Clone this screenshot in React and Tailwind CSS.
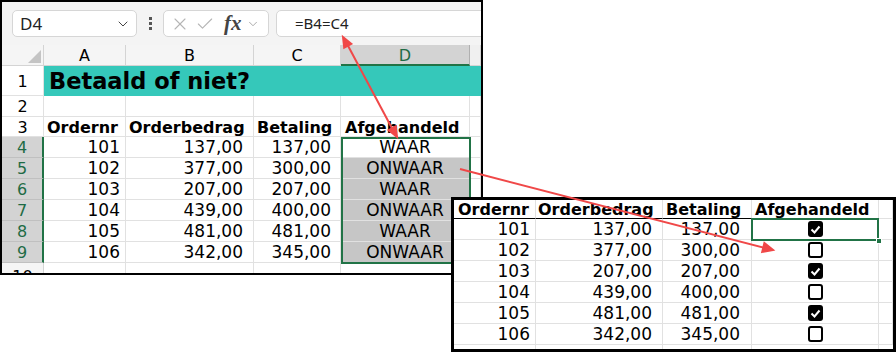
import React from "react";
import { X, Check, ChevronDown } from "lucide-react";

const rows = [
  [101, "137,00", "137,00", true],
  [102, "377,00", "300,00", false],
  [103, "207,00", "207,00", true],
  [104, "439,00", "400,00", false],
  [105, "481,00", "481,00", true],
  [106, "342,00", "345,00", false],
];

const cell = "border-r border-b border-[#e1e1e1] flex items-center overflow-hidden whitespace-nowrap pt-[2px]";
const font = { fontFamily: '"DejaVu Sans", Verdana, sans-serif' };

function Toolbar() {
  return (
    <div className="flex items-start h-[43px] bg-[#f4f4f4] pt-[8px] pl-[10px]" style={{ fontFamily: '"Noto Sans", "Open Sans", sans-serif' }}>
      <div className="shrink-0 w-[125px] h-[27px] rounded-[5px] border border-[#d6d6d6] bg-white flex items-center justify-between pl-[7px] pr-[5px] text-[17px] text-[#222]">
        <span>D4</span>
        <ChevronDown size={16} strokeWidth={1.5} className="text-[#444]" />
      </div>
      <div className="shrink-0 w-[26px] h-[27px] flex flex-col items-center justify-center gap-[2px]">
        <div className="w-[3px] h-[3px] bg-[#555]"></div>
        <div className="w-[3px] h-[3px] bg-[#555]"></div>
        <div className="w-[3px] h-[3px] bg-[#555]"></div>
      </div>
      <div className="shrink-0 w-[106px] h-[27px] rounded-[5px] border border-[#d6d6d6] bg-white flex items-center pl-[6px]">
        <X size={20} strokeWidth={1.3} className="text-[#b5b5b5]" />
        <Check size={20} strokeWidth={1.3} className="text-[#b5b5b5] ml-[5px]" />
        <span className="ml-[9px] text-[21px] italic font-bold text-[#444] leading-none" style={{ fontFamily: '"Liberation Serif", serif' }}>fx</span>
        <ChevronDown size={14} strokeWidth={1.4} className="text-[#999] ml-[4px]" />
      </div>
      <div className="shrink-0 ml-[7px] w-[260px] h-[27px] rounded-[5px] border border-[#d6d6d6] bg-white flex items-center pl-[18px] text-[15px] text-[#222]">
        =B4=C4
      </div>
    </div>
  );
}

function Sheet1() {
  const hdr = "border-r border-b border-[#d4d4d4] flex items-center justify-center text-[16px] pt-[2px]";
  return (
    <div className="relative grid grid-cols-[42px_82px_128px_87px_129px_11px] grid-rows-[21px_30px_21px_20px_21px_21px_21px_21px_21px_21px_21px] bg-white" style={font}>
      <div className={`${hdr} bg-[#f5f5f5] relative`}>
        <svg width="42" height="21" className="absolute inset-0">
          <polygon points="26,18 39,18 39,5" fill="#c4c4c4" />
        </svg>
      </div>
      <div className={`${hdr} bg-[#f5f5f5]`}>A</div>
      <div className={`${hdr} bg-[#f5f5f5]`}>B</div>
      <div className={`${hdr} bg-[#f5f5f5]`}>C</div>
      <div className="border-r border-[#b0b0b0] border-b-2 border-b-[#217346] bg-[#d3d3d3] flex items-center justify-center text-[16px] pt-[2px] text-[#1e6b45]">D</div>
      <div className={`${hdr} bg-[#f0f0f0]`}></div>

      <div className={`${cell} justify-center text-[16px] bg-white`}>1</div>
      <div className="col-span-5 bg-[#35c8ba] flex items-center pl-[5px] pt-[2px] text-[22.5px] font-bold text-black">Betaald of niet?</div>

      <div className={`${cell} justify-center text-[16px]`}>2</div>
      <div className={cell}></div>
      <div className={cell}></div>
      <div className={cell}></div>
      <div className={cell}></div>
      <div className={cell}></div>

      <div className={`${cell} justify-center text-[16px]`}>3</div>
      <div className={`${cell} pl-[3px] font-bold text-[16px]`}>Ordernr</div>
      <div className={`${cell} pl-[3px] font-bold text-[16px]`}>Orderbedrag</div>
      <div className={`${cell} pl-[3px] font-bold text-[16px]`}>Betaling</div>
      <div className={`${cell} pl-[4px] font-bold text-[16px]`}>Afgehandeld</div>
      <div className={cell}></div>

      {rows.map((r, i) => (
        <React.Fragment key={r[0]}>
          <div className="border-b border-[#c0c0c0] border-r-2 border-r-[#217346] bg-[#d3d3d3] flex items-center justify-center pt-[2px] text-[16px] text-[#1e6b45]">{i + 4}</div>
          <div className={`${cell} justify-end pr-[5px] text-[17px]`}>{r[0]}</div>
          <div className={`${cell} justify-end pr-[10px] text-[17px]`}>{r[1]}</div>
          <div className={`${cell} justify-end pr-[9px] text-[17px]`}>{r[2]}</div>
          <div className={`${cell} justify-center text-[17px] ${i === 0 ? "bg-white" : "bg-[#c6c6c6]"}`}>{r[3] ? "WAAR" : "ONWAAR"}</div>
          <div className={cell}></div>
        </React.Fragment>
      ))}

      <div className="border-r border-[#d4d4d4] bg-[#f5f5f5] flex items-start justify-center text-[16px] pt-[2px]">10</div>
      <div className={cell}></div>
      <div className={cell}></div>
      <div className={cell}></div>
      <div className={cell}></div>
      <div className={cell}></div>

      <div className="absolute left-[339px] top-[92px] w-[130px] h-[127px] border-2 border-[#217346]"></div>
    </div>
  );
}

function Checkbox({ checked }) {
  return checked ? (
    <div className="w-[15px] h-[16px] rounded-[3px] bg-black flex items-center justify-center">
      <svg width="11" height="11" viewBox="0 0 11 11">
        <polyline points="1.5,5.5 4.5,8.5 9.5,2.5" fill="none" stroke="white" strokeWidth="2" />
      </svg>
    </div>
  ) : (
    <div className="w-[15px] h-[16px] rounded-[3px] border-2 border-black bg-white"></div>
  );
}

function Sheet2() {
  const h = "border-r border-[#e1e1e1] border-b border-b-black flex items-center font-bold text-[16px] whitespace-nowrap overflow-hidden pt-[2px]";
  return (
    <div className="relative grid grid-cols-[82px_127px_89px_127px_14px] grid-rows-[19px_21px_21px_21px_21px_21px_21px_4px] bg-white" style={font}>
      <div className={`${h} pl-[4px]`}>Ordernr</div>
      <div className={`${h} pl-[2px]`}>Orderbedrag</div>
      <div className={`${h} pl-[3px]`}>Betaling</div>
      <div className={`${h} pl-[3px]`}>Afgehandeld</div>
      <div className="border-r border-b border-[#e1e1e1]"></div>
      {rows.map((r) => (
        <React.Fragment key={r[0]}>
          <div className={`${cell} justify-end pr-[5px] text-[17px]`}>{r[0]}</div>
          <div className={`${cell} justify-end pr-[10px] text-[17px]`}>{r[1]}</div>
          <div className={`${cell} justify-end pr-[11px] text-[17px]`}>{r[2]}</div>
          <div className="border-r border-b border-[#e1e1e1] flex items-center justify-center"><Checkbox checked={r[3]} /></div>
          <div className={cell}></div>
        </React.Fragment>
      ))}
      <div className="border-r border-[#e1e1e1]"></div>
      <div className="border-r border-[#e1e1e1]"></div>
      <div className="border-r border-[#e1e1e1]"></div>
      <div className="border-r border-[#e1e1e1]"></div>
      <div></div>
      <div className="absolute left-[297px] top-[18px] w-[128px] h-[23px] border-2 border-[#217346]"></div>
      <div className="absolute left-[422px] top-[38px] w-[6px] h-[6px] bg-[#217346] border border-white"></div>
    </div>
  );
}

export default function App() {
  return (
    <div className="relative w-[896px] h-[354px] bg-white overflow-hidden text-black">
      <div className="absolute left-0 top-0 w-[483px] h-[275px] border-2 border-black overflow-hidden bg-white">
        <Toolbar />
        <Sheet1 />
      </div>
      <div className="absolute left-[451px] top-[197px] w-[445px] h-[155px] border-[3px] border-black overflow-hidden bg-white">
        <Sheet2 />
      </div>
      <svg className="absolute inset-0 pointer-events-none" width="896" height="354">
        <g stroke="#f04848" strokeWidth="2" fill="#f04848">
          <line x1="346" y1="42" x2="394" y2="132" />
          <polygon points="343,37 344.2,47.7 351.3,43.9" />
          <polygon points="397,137 388.7,130.1 395.8,126.3" />
          <line x1="460" y1="169" x2="765" y2="248" />
          <polygon points="773,250 762.2,251.9 764.4,243.1" />
        </g>
      </svg>
    </div>
  );
}
